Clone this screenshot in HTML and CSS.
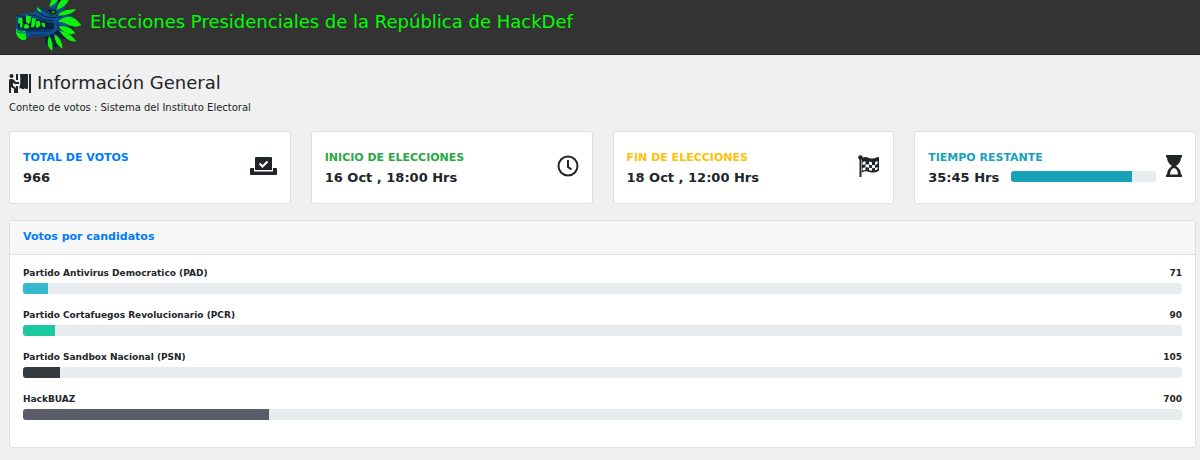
FILE: index.html
```html
<!DOCTYPE html>
<html lang="es">

<head>
    <meta charset="UTF-8" />
    <meta name="viewport" content="width=device-width, initial-scale=1.0" />
    <title>Elecciones HackDef</title>
    <link rel="stylesheet" href="styles.css">
</head>

<body>
    <header class="navbar">
        <svg class="logo" viewBox="45 0 201 156" aria-hidden="true">
            <!-- feathers -->
            <g fill="#06223f">
                <path d="M150 24 Q146 8 158 -4 L186 -4 Q190 12 176 30Z" />
                <path d="M174 40 Q196 34 222 50 L204 64 L176 62Z" />
                <path d="M168 62 Q196 54 232 66 L214 92 L174 84Z" />
                <path d="M164 84 L188 90 Q212 102 214 120 L186 116 L160 98Z" />
                <path d="M134 104 L160 94 Q176 120 182 140 L156 140 L138 132Z" />
            </g>
            <g fill="#104f92">
                <path d="M148 24 Q152 4 164 -4 L176 -4 L166 28Z" />
                <path d="M168 34 Q184 14 204 4 L188 34 L172 48Z" />
                <path d="M172 54 Q196 42 222 48 L200 62 L174 68Z" />
                <path d="M174 70 Q200 60 236 70 L206 78 L176 80Z" />
                <path d="M170 86 Q196 90 210 104 L184 100Z" />
                <path d="M158 98 Q176 106 184 126 L170 116Z" />
            </g>
            <g fill="#0df20a">
                <path d="M148 20 Q150 4 158 -4 L174 -4 Q170 14 148 20Z" />
                <path d="M169 30 Q172 10 189 -4 L208 -4 Q200 20 169 30Z" />
                <path d="M172 47 Q188 26 228 28 Q214 48 172 47Z" />
                <path d="M174 65 Q196 44 220 53 Q230 58 244 76 Q226 84 208 76 Q192 66 174 65Z" />
                <path d="M175 80 Q206 72 226 100 Q202 110 175 80Z" />
                <path d="M178 92 Q210 96 229 124 Q202 128 178 92Z" />
                <path d="M163 103 Q186 116 188 146 Q164 136 163 103Z" />
                <path d="M147 107 Q162 126 156 153 Q136 138 147 107Z" />
            </g>
            <!-- head -->
            <path fill="#104f92" d="M48 50 Q66 40 92 40 Q104 38 108 26 Q120 18 132 26 Q146 36 150 26 Q164 20 172 30 Q180 44 172 62 L172 88 Q160 106 140 108 L90 110 Q80 118 62 112 Q48 104 48 90Z" />
            <path fill="#06223f" d="M52 56 Q88 46 122 60 Q146 68 162 70 L162 88 L76 90 L54 84Z" />
            <path fill="#09376b" d="M76 90 L158 90 L148 96 L78 97Z M88 104 L140 101 L130 106 L90 108Z" />
            <path fill="none" stroke="#06223f" stroke-width="3" d="M50 47 Q72 52 92 46 Q110 44 132 60 L162 64 M108 28 Q114 40 124 42 Q136 56 170 52 M110 26 Q124 20 138 34 L172 46" />
            <path fill="#06223f" d="M140 32 Q146 26 154 28 Q172 26 174 40 L160 48 Q148 48 140 32Z" />
            <path fill="none" stroke="#0b9d22" stroke-width="2" d="M142 32 Q150 46 166 46 Q174 38 171 29" />
            <circle cx="160" cy="36" r="4" fill="#6d8d19" />
            <path fill="#0df20a" d="M110 22 Q120 24 125 38 Q112 36 110 22Z" />
            <!-- teeth -->
            <g fill="#0df20a">
                <path d="M55 54 L67 53 L68 64 L64 72 L54 70Z" />
                <path d="M78 46 L93 49 L92 64 L86 73 L78 66Z" />
                <path d="M61 66 L69 68 L67 83 L60 82Z" />
                <path d="M73 74 L80 71 L88 79 L85 86 L71 85Z" />
                <path d="M96 54 L108 56 L106 70 L102 82 L93 82Z" />
                <path d="M109 62 L120 64 L121 76 L114 83 L107 82Z" />
                <path d="M124 68 L134 69 L136 82 L128 80Z" />
                <path d="M48 86 Q56 98 76 93 L78 110 Q82 118 72 121 Q54 120 48 100Z" />
            </g>
            <path fill="none" stroke="#104f92" stroke-width="3" d="M50 95 Q62 102 78 98" />
        </svg>
        <h1 class="brand">Elecciones Presidenciales de la República de HackDef</h1>
    </header>

    <main class="container">
        <div class="heading">
            <svg class="icon-booth" viewBox="0 0 22 20" aria-hidden="true">
                <circle cx="2.500" cy="3" r="2" />
                <path d="M1 6h2q1 0 2 1l2 2h3v2H6L4 9.500V13l2 1q1 1 1 2v4H5v-4l-3-2v6H0V8q0-2 1-2z" />
                <path d="M7 1h2v6H7zM7 13h2v7H7zM11 1h8v14.500q-2 1.500-3-.5-1 2-2.500 1T10 15.500Q12 11 11 1zM20 1h2v19h-2z" />
            </svg>
            <h2>Información General</h2>
        </div>
        <p class="subtitle">Conteo de votos : Sistema del Instituto Electoral</p>

        <div class="cards">
            <div class="card">
                <div class="card-text">
                    <div class="label blue">TOTAL DE VOTOS</div>
                    <div class="value">966</div>
                </div>
                <svg class="icon wide" viewBox="0 0 27 22" aria-hidden="true">
                    <path d="M1 13h3v3.500h19V13h3q1 0 1 1v5q0 1-1 1H1q-1 0-1-1v-5q0-1 1-1z" />
                    <path d="M6 2h15q1 0 1 1v12H5V3q0-1 1-1z" />
                    <path class="check" d="M9.500 8.500l3 3 5-5" />
                </svg>
            </div>
            <div class="card">
                <div class="card-text">
                    <div class="label green">INICIO DE ELECCIONES</div>
                    <div class="value">16 Oct , 18:00 Hrs</div>
                </div>
                <svg class="icon" viewBox="0 0 22 22" aria-hidden="true">
                    <circle class="line" cx="11" cy="11" r="9.500" />
                    <path class="line" d="M11 5v7l3.500 2.500" />
                </svg>
            </div>
            <div class="card">
                <div class="card-text">
                    <div class="label yellow">FIN DE ELECCIONES</div>
                    <div class="value">18 Oct , 12:00 Hrs</div>
                </div>
                <svg class="icon" viewBox="0 0 22 22" aria-hidden="true">
                    <circle cx="2.500" cy="2.500" r="2.300" />
                    <path d="M1.500 2h2v20h-2z" />
                    <path d="M4 3q3-2 7 0 4 1.500 8-.7 2-1 2 .9v12.500q-5 3-9.500 1.300-4-1.500-7.500.5z" />
                    <path class="squares" d="M4.500 7l3-.8v3l-3 .8zM11 6.500l3 .7v3l-3-.7zM17 7l2.500-1v3L17 10zM7.500 9.200l3.500.3v3l-3.500-.3zM14 10.200l3-.2v3l-3 .2zM4.500 13l3-.8v2.700l-3 .6zM11 12.500l3 .7v2.600l-3-.6zM17 13l2.500-1v2.500l-2.500.8z" />
                </svg>
            </div>
            <div class="card">
                <div class="card-text">
                    <div class="label teal">TIEMPO RESTANTE</div>
                    <div class="remaining">
                        <div class="value">35:45 Hrs</div>
                        <div class="progress">
                            <div class="bar bg-teal" style="width: 83.5%"></div>
                        </div>
                    </div>
                </div>
                <svg class="icon narrow" viewBox="0 0 16 22" aria-hidden="true">
                    <path d="M0 0h16v2.500H0zM0 19.500h16V22H0z" />
                    <path d="M1 2h14q0 6-5 9 5 3 5 9h-3q0-6-4-7-4 1-4 7H1q0-6 5-9-5-3-5-9z" />
                </svg>
            </div>
        </div>

        <section class="panel">
            <h3 class="panel-header">Votos por candidatos</h3>
            <div class="panel-body">
                <div class="candidate">
                    <h4><span>Partido Antivirus Democratico (PAD)</span><span>71</span></h4>
                    <div class="progress">
                        <div class="bar bg-cyan" style="width: 2.2%"></div>
                    </div>
                </div>
                <div class="candidate">
                    <h4><span>Partido Cortafuegos Revolucionario (PCR)</span><span>90</span></h4>
                    <div class="progress">
                        <div class="bar bg-green" style="width: 2.75%"></div>
                    </div>
                </div>
                <div class="candidate">
                    <h4><span>Partido Sandbox Nacional (PSN)</span><span>105</span></h4>
                    <div class="progress">
                        <div class="bar bg-dark" style="width: 3.2%"></div>
                    </div>
                </div>
                <div class="candidate">
                    <h4><span>HackBUAZ</span><span>700</span></h4>
                    <div class="progress">
                        <div class="bar bg-gray" style="width: 21.2%"></div>
                    </div>
                </div>
            </div>
        </section>
    </main>
</body>

</html>
```
FILE: styles.css
```css
* {
    box-sizing: border-box;
    margin: 0;
    padding: 0;
}

body {
    background-color: #f0f0f0;
    color: #212529;
    font-family: Verdana, "DejaVu Sans", sans-serif;
}

.navbar {
    display: flex;
    align-items: flex-start;
    gap: 8px;
    padding: 0 15px 2px;
    background-color: #333;
    border-bottom: 1px solid #222;
}

.logo {
    width: 67px;
    height: 52px;
    flex-shrink: 0;
}

.brand {
    color: #0f0;
    font-size: 18px;
    font-weight: 400;
    line-height: 44px;
}

.container {
    padding: 16px 4px 12px 9px;
}

.heading {
    display: flex;
    align-items: center;
    gap: 6px;
}

.heading h2 {
    font-size: 18px;
    font-weight: 400;
    line-height: 24px;
}

.icon-booth {
    width: 22px;
    height: 20px;
    fill: #212529;
}

.subtitle {
    margin: 5px 0 15px;
    font-size: 10px;
    line-height: 16px;
}

.cards {
    display: grid;
    grid-template-columns: repeat(4, 1fr);
    gap: 20px;
    margin-bottom: 16px;
}

.card {
    display: flex;
    align-items: flex-start;
    justify-content: space-between;
    gap: 10px;
    padding: 16px 13px 15px;
    background-color: #fff;
    border: 1px solid #dfdfdf;
    border-radius: 3px;
}

.card-text {
    flex: 1;
}

.label {
    font-size: 11px;
    font-weight: 700;
    line-height: 20px;
}

.value {
    font-size: 13px;
    font-weight: 700;
    line-height: 20px;
    white-space: nowrap;
}

.remaining {
    display: flex;
    align-items: flex-start;
    gap: 12px;
}

.remaining .progress {
    flex: 1;
    margin-top: 3px;
}

.blue {
    color: #007bff;
}

.green {
    color: #28a745;
}

.yellow {
    color: #ffc107;
}

.teal {
    color: #17a2b8;
}

.icon {
    width: 22px;
    height: 22px;
    margin-top: 7px;
    flex-shrink: 0;
    fill: #212529;
}

.icon.wide {
    width: 27px;
}

.icon.narrow {
    width: 16px;
}

.icon .check {
    fill: none;
    stroke: #fff;
    stroke-width: 2;
}

.icon .line {
    fill: none;
    stroke: #212529;
    stroke-width: 2;
}

.icon .squares {
    fill: #fff;
}

.progress {
    height: 11px;
    overflow: hidden;
    background-color: #e9ecef;
    border-radius: 3px;
}

.bar {
    height: 100%;
}

.bg-teal {
    background-color: #17a2b8;
}

.bg-cyan {
    background-color: #36b9cc;
}

.bg-green {
    background-color: #1cc8a0;
}

.bg-dark {
    background-color: #343a40;
}

.bg-gray {
    background-color: #5a5c69;
}

.panel {
    background-color: #fff;
    border: 1px solid #dfdfdf;
    border-radius: 3px;
}

.panel-header {
    padding: 6px 13px 7px;
    background-color: #f7f7f7;
    border-bottom: 1px solid #dfdfdf;
    color: #007bff;
    font-size: 11px;
    line-height: 20px;
}

.panel-body {
    padding: 12px 13px;
}

.candidate {
    margin-bottom: 15px;
}

.candidate h4 {
    display: flex;
    justify-content: space-between;
    margin-bottom: 4px;
    font-size: 9px;
    line-height: 12px;
}
```
